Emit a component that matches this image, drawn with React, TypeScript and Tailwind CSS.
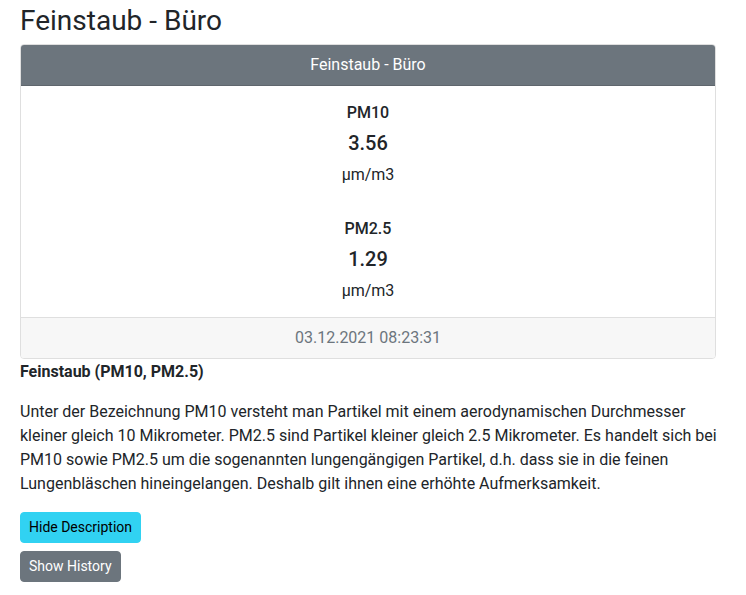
import React from "react";

const readings = [
  { label: "PM10", value: "3.56", unit: "µm/m3" },
  { label: "PM2.5", value: "1.29", unit: "µm/m3" },
];

const description = [
  "Unter der Bezeichnung PM10 versteht man Partikel mit einem aerodynamischen Durchmesser",
  "kleiner gleich 10 Mikrometer. PM2.5 sind Partikel kleiner gleich 2.5 Mikrometer. Es handelt sich bei",
  "PM10 sowie PM2.5 um die sogenannten lungengängigen Partikel, d.h. dass sie in die feinen",
  "Lungenbläschen hineingelangen. Deshalb gilt ihnen eine erhöhte Aufmerksamkeit.",
];

export default function App() {
  return (
    <div
      className="min-h-screen bg-white px-5 text-[#212529]"
      style={{ fontFamily: "Roboto, 'Open Sans', sans-serif" }}
    >
      <div className="w-[696px]">
        <h2 className="text-[28px] leading-[33.6px] font-normal mt-1 mb-[6px]">
          Feinstaub - Büro
        </h2>

        {/* Card */}
        <div className="border border-[#dfdfdf] rounded-[4px] overflow-hidden">
          <div className="bg-[#6c757d] text-white text-center text-base leading-6 py-2 border-b border-[#5f666d]">
            Feinstaub - Büro
          </div>
          <div className="flex flex-col items-center pt-[15px] pb-[14px]">
            {readings.map((r, i) => (
              <div
                key={r.label}
                className={`flex flex-col items-center ${i > 0 ? "mt-[30px]" : ""}`}
              >
                <div className="text-base leading-6 font-medium">{r.label}</div>
                <div className="text-xl leading-[30px] font-medium mt-[3px]">
                  {r.value}
                </div>
                <div className="text-base leading-6 mt-[5px]">{r.unit}</div>
              </div>
            ))}
          </div>
          <div className="bg-[#f7f7f7] border-t border-[#dfdfdf] text-center text-[#6c757d] text-base leading-6 py-2">
            03.12.2021 08:23:31
          </div>
        </div>

        <div className="font-bold text-base leading-6 mt-[1px]">Feinstaub (PM10, PM2.5)</div>
        <p className="text-base leading-6 mt-4">
          {description.map((line) => (
            <span key={line} className="block whitespace-nowrap">
              {line}
            </span>
          ))}
        </p>

        <div className="flex flex-col items-start gap-2 mt-4">
          <button className="bg-[#31d2f2] border border-[#31d2f2] text-black text-sm leading-[21px] px-2 py-1 rounded-[4px]">
            Hide Description
          </button>
          <button className="bg-[#6c757d] border border-[#6c757d] text-white text-sm leading-[21px] px-2 py-1 rounded-[4px]">
            Show History
          </button>
        </div>
      </div>
    </div>
  );
}
